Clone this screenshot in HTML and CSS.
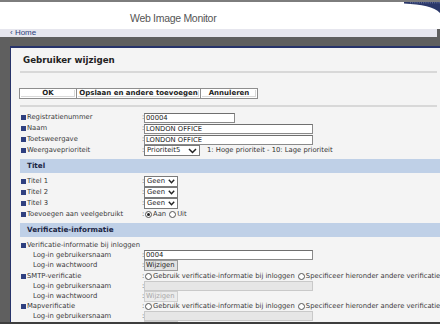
FILE: index.html
```html
<!DOCTYPE html>
<html lang="nl">
<head>
<meta charset="utf-8">
<title>Gebruiker wijzigen</title>
<link rel="stylesheet" href="styles.css">
</head>
<body>
<div class="page">
  <header class="top">
    <span class="brand">Web Image Monitor</span>
    <svg class="swoosh" width="36" height="12" viewBox="0 0 36 12" aria-hidden="true">
      <path d="M0 0 H36 V11 C30 5 18 2.5 0 1.6 Z" fill="#2b3869"/>
      <line x1="6" y1="0.8" x2="36" y2="0.8" stroke="#8d97bf" stroke-width="0.8" stroke-dasharray="1 1.2"/>
    </svg>
  </header>
  <nav class="crumb"><a class="home" href="#">&#8249; Home</a></nav>
  <div class="overlay">
    <div class="modal">
      <h1 class="title">Gebruiker wijzigen</h1>
      <div class="sep"></div>
      <div class="buttons">
        <button class="btn w58">OK</button>
        <button class="btn w124">Opslaan en andere toevoegen</button>
        <button class="btn w58">Annuleren</button>
      </div>
      <div class="sep"></div>
      <div class="form">
        <div class="row r11"><span class="lbl"><i class="b"></i>Registratienummer</span><span class="val"><span class="c">:</span><span class="in w90">00004</span></span></div>
        <div class="row r11"><span class="lbl"><i class="b"></i>Naam</span><span class="val"><span class="c">:</span><span class="in w169">LONDON OFFICE</span></span></div>
        <div class="row r11"><span class="lbl"><i class="b"></i>Toetsweergave</span><span class="val"><span class="c">:</span><span class="in w169">LONDON OFFICE</span></span></div>
        <div class="row r11"><span class="lbl"><i class="b"></i>Weergaveprioriteit</span><span class="val"><span class="c">:</span><span class="sel w56">Prioriteit5<svg class="chev" width="9" height="6" viewBox="0 0 9 6"><path d="M1 1 L4.5 4.5 L8 1" fill="none" stroke="#222" stroke-width="1.5"/></svg></span><span class="hint">1: Hoge prioriteit - 10: Lage prioriteit</span></span></div>

        <div class="sect">Titel</div>
        <div class="row r11"><span class="lbl"><i class="b"></i>Titel 1</span><span class="val"><span class="c">:</span><span class="sel w34">Geen<svg class="chev" width="7" height="5" viewBox="0 0 7 5"><path d="M0.8 0.8 L3.5 3.8 L6.2 0.8" fill="none" stroke="#222" stroke-width="1.4"/></svg></span></span></div>
        <div class="row r11"><span class="lbl"><i class="b"></i>Titel 2</span><span class="val"><span class="c">:</span><span class="sel w34">Geen<svg class="chev" width="7" height="5" viewBox="0 0 7 5"><path d="M0.8 0.8 L3.5 3.8 L6.2 0.8" fill="none" stroke="#222" stroke-width="1.4"/></svg></span></span></div>
        <div class="row r11"><span class="lbl"><i class="b"></i>Titel 3</span><span class="val"><span class="c">:</span><span class="sel w34">Geen<svg class="chev" width="7" height="5" viewBox="0 0 7 5"><path d="M0.8 0.8 L3.5 3.8 L6.2 0.8" fill="none" stroke="#222" stroke-width="1.4"/></svg></span></span></div>
        <div class="row r11"><span class="lbl"><i class="b"></i>Toevoegen aan veelgebruikt</span><span class="val"><span class="c">:</span><span class="rad on"></span><span class="rt">Aan</span><span class="rad"></span><span class="rt">Uit</span></span></div>

        <div class="sect">Verificatie-informatie</div>
        <div class="row r10"><span class="lbl"><i class="b"></i>Verificatie-informatie bij inloggen</span><span class="val"></span></div>
        <div class="row r10"><span class="lbl sub">Log-in gebruikersnaam</span><span class="val"><span class="c">:</span><span class="in w169">0004</span></span></div>
        <div class="row r11"><span class="lbl sub">Log-in wachtwoord</span><span class="val"><span class="c">:</span><span class="wbtn">Wijzigen</span></span></div>
        <div class="row r10"><span class="lbl"><i class="b"></i>SMTP-verificatie</span><span class="val"><span class="c">:</span><span class="rad"></span><span class="rt">Gebruik verificatie-informatie bij inloggen</span><span class="rad"></span><span class="rt">Specificeer hieronder andere verificatie-informatie</span></span></div>
        <div class="row r10"><span class="lbl sub">Log-in gebruikersnaam</span><span class="val"><span class="c">:</span><span class="in w169 dis"></span></span></div>
        <div class="row r10"><span class="lbl sub">Log-in wachtwoord</span><span class="val"><span class="c">:</span><span class="wbtn dis">Wijzigen</span></span></div>
        <div class="row r10"><span class="lbl"><i class="b"></i>Mapverificatie</span><span class="val"><span class="c">:</span><span class="rad"></span><span class="rt">Gebruik verificatie-informatie bij inloggen</span><span class="rad"></span><span class="rt">Specificeer hieronder andere verificatie-informatie</span></span></div>
        <div class="row r10"><span class="lbl sub">Log-in gebruikersnaam</span><span class="val"><span class="c">:</span><span class="in w169 dis"></span></span></div>
        <div class="row r10"><span class="lbl sub">Log-in wachtwoord</span><span class="val"><span class="c">:</span><span class="wbtn dis">Wijzigen</span></span></div>
      </div>
    </div>
  </div>
</div>
</body>
</html>
```

FILE: styles.css
```css
* { box-sizing: border-box; }
html, body { margin: 0; padding: 0; }
body {
  width: 440px;
  height: 324px;
  overflow: hidden;
  background: #5f5f5f;
  font-family: "DejaVu Sans", Verdana, sans-serif;
  font-size: 6.8px;
  color: #3a3a3a;
}
.page {
  width: 440px;
  height: 324px;
  overflow: hidden;
  display: flex;
  flex-direction: column;
  border-bottom: 2px solid #3e3e3e;
}
.top {
  flex: none;
  height: 29px;
  background: #fff;
  border-top: 2px solid #7d7d7d;
  display: flex;
  align-items: flex-start;
  padding-left: 130px;
}
.brand {
  font-family: "Liberation Sans", Arial, sans-serif;
  font-size: 10.5px;
  letter-spacing: -0.3px;
  color: #555;
  margin-top: 10px;
  line-height: 12px;
}
.swoosh { margin-left: auto; display: block; }
.crumb {
  flex: none;
  height: 8px;
  background: #e6e6ee;
  margin-right: 3px;
  padding-left: 10px;
  font-family: "Liberation Sans", Arial, sans-serif;
  font-size: 8px;
  line-height: 8px;
}
.home { color: #2b3d7a; text-decoration: none; }
.overlay {
  flex: 1;
  min-height: 0;
  background: #5f5f5f;
  padding: 9px 0 0 10px;
  display: flex;
}
.modal {
  flex: 1;
  background: #f4f4f4;
  border-top: 2px solid #27336a;
  border-left: 1px solid #27336a;
  padding-left: 9px;
  overflow: hidden;
}
.title {
  margin: 0;
  padding: 7px 0 0 3px;
  height: 23px;
  font-size: 8.7px;
  line-height: 10px;
  font-weight: bold;
  color: #222;
}
.sep {
  height: 2px;
  margin-right: 3px;
  background: #d8d8d8;
}
.buttons {
  display: flex;
  margin: 15px 0 6px -1px;
  height: 11px;
}
.btn {
  height: 11px;
  padding: 0;
  margin: 0 0 0 -1px;
  background: #fff;
  border: 1px solid #8e8e8e;
  box-shadow: inset 0 0 0 1px #fff, inset -1px -1px 0 1px #d9d9d9;
  font-family: "DejaVu Sans", Verdana, sans-serif;
  font-size: 7px;
  font-weight: bold;
  line-height: 9px;
  color: #222;
  text-align: center;
}
.btn:first-child { margin-left: 0; }
.w58 { width: 58px; }
.w124 { width: 125px; }
.form { padding-top: 5px; }
.row {
  display: grid;
  grid-template-columns: 122px 1fr;
  align-items: center;
  white-space: nowrap;
}
.r11 { height: 11px; }
.r10 { height: 10px; }
.lbl {
  display: flex;
  align-items: center;
  line-height: 9px;
}
.lbl.sub { padding-left: 13px; }
.b {
  width: 5px;
  height: 5px;
  background: #2f4080;
  margin: 0 1px 0 1px;
  flex: none;
}
.val {
  display: flex;
  align-items: center;
  line-height: 9px;
}
.c { width: 2px; flex: none; }
.in {
  display: block;
  height: 10px;
  background: #fff;
  border: 1px solid #8a8a8a;
  border-top-color: #6f6f6f;
  padding-left: 1px;
  line-height: 8px;
  color: #222;
  flex: none;
}
.in.dis {
  background: #e6e6e6;
  border-color: #c9c9c9;
}
.w90 { width: 91px; }
.w169 { width: 169px; }
.sel {
  display: flex;
  align-items: center;
  justify-content: space-between;
  height: 11px;
  background: #fff;
  border: 1px solid #7a7a7a;
  padding: 0 2px 0 2px;
  line-height: 9px;
  color: #222;
  flex: none;
}
.w56 { width: 56px; }
.w34 { width: 34px; }
.chev { display: block; flex: none; }
.hint { margin-left: 7px; color: #333; }
.sect {
  height: 14px;
  margin: 3px 0;
  background: #bfd0e7;
  padding-left: 7px;
  font-weight: bold;
  font-size: 7.2px;
  line-height: 14px;
  color: #1c2644;
}
.rad {
  width: 7px;
  height: 7px;
  border-radius: 50%;
  border: 1px solid #555;
  background: #fff;
  margin: 0 1px 0 1px;
  flex: none;
  display: flex;
  align-items: center;
  justify-content: center;
}
.rad.on::after {
  content: "";
  width: 3px;
  height: 3px;
  border-radius: 50%;
  background: #222;
}
.rt { margin-right: 2px; }
.wbtn {
  display: block;
  width: 34px;
  height: 11px;
  background: #e2e2e2;
  border: 1px solid #9a9a9a;
  padding-left: 1px;
  line-height: 9px;
  color: #222;
  flex: none;
}
.wbtn.dis {
  background: #ececec;
  border-color: #cfcfcf;
  color: #a8a8a8;
}
```
